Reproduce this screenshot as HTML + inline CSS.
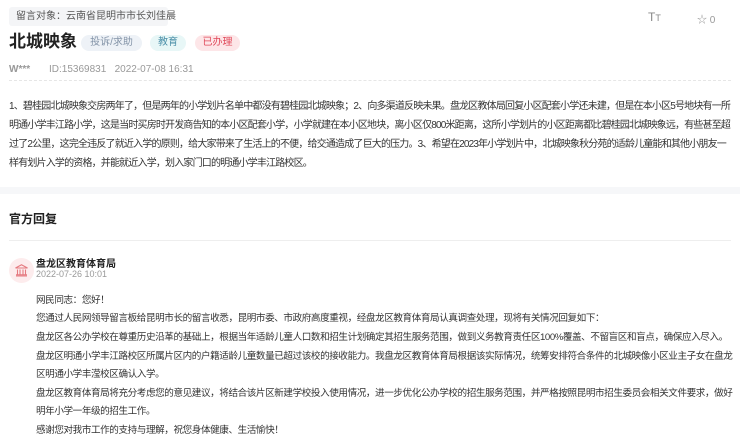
<!DOCTYPE html>
<html><head><meta charset="utf-8"><style>
*{margin:0;padding:0;box-sizing:border-box}
body{width:740px;height:446px;background:#fff;font-family:"Liberation Sans","Noto Sans CJK SC",sans-serif;color:#333;position:relative;overflow:hidden}
.a{position:absolute;white-space:nowrap}
.tag{position:absolute;height:16px;line-height:16px;border-radius:8px;font-size:10px;text-align:center}
.l{position:absolute;white-space:nowrap;font-size:10px;letter-spacing:-0.82px;color:#333;left:9px}
.r{position:absolute;white-space:nowrap;font-size:9.6px;letter-spacing:-0.43px;color:#333;left:36px}
</style></head><body>
<div class="a" style="left:9px;top:7px;width:159px;height:19px;background:#f4f5f7;border-radius:3px;font-size:10px;color:#555;line-height:19px;padding-left:7px">留言对象：云南省昆明市市长刘佳晨</div>
<div class="a" style="left:9px;top:31px;font-size:17px;font-weight:bold;color:#222;line-height:22px">北城映象</div>
<div class="tag" style="left:81px;top:35px;width:61px;background:#eef2f7;color:#8494a8">投诉/求助</div>
<div class="tag" style="left:150px;top:35px;width:36px;background:#e8f7f7;color:#4a8fa8">教育</div>
<div class="tag" style="left:195px;top:35px;width:45px;background:#fde6e8;color:#e0495a">已办理</div>
<div class="a" style="left:9px;top:63px;font-size:10px;color:#888;line-height:14px"><b style="color:#999">W***</b></div>
<div class="a" style="left:49px;top:63px;font-size:10px;color:#999;line-height:14px">ID:15369831&nbsp;&nbsp;&nbsp;2022-07-08 16:31</div>
<div class="a" style="left:9px;top:80px;width:722px;border-top:1px dashed #e6e6e6"></div>
<div class="a" style="left:648px;top:10px;font-size:12px;color:#888">T<span style="font-size:9px">T</span></div>
<div class="a" style="left:697px;top:11px;font-size:10px;color:#999">☆ 0</div>
<div class="l" style="top:97px">1、碧桂园北城映象交房两年了，但是两年的小学划片名单中都没有碧桂园北城映象；2、向多渠道反映未果。盘龙区教体局回复小区配套小学还未建，但是在本小区5号地块有一所</div>
<div class="l" style="top:116px">明通小学丰江路小学，这是当时买房时开发商告知的本小区配套小学，小学就建在本小区地块，离小区仅800米距离，这所小学划片的小区距离都比碧桂园北城映象远，有些甚至超</div>
<div class="l" style="top:135px">过了2公里，这完全违反了就近入学的原则，给大家带来了生活上的不便，给交通造成了巨大的压力。3、希望在2023年小学划片中，北城映象秋分苑的适龄儿童能和其他小朋友一</div>
<div class="l" style="top:154px">样有划片入学的资格，并能就近入学，划入家门口的明通小学丰江路校区。</div>
<div class="a" style="left:0;top:187px;width:740px;height:7px;background:#f6f7f9"></div>
<div class="a" style="left:9px;top:210px;font-size:12px;font-weight:bold;color:#222">官方回复</div>
<div class="a" style="left:9px;top:240px;width:722px;border-top:1px solid #eeeeee"></div>
<div class="a" style="left:9px;top:258px;width:25px;height:25px;border-radius:50%;background:#fdeced"></div>
<svg class="a" style="left:14px;top:263px" width="15" height="15" viewBox="0 0 15 15" fill="none" stroke="#e57a80" stroke-width="1.1"><path d="M1.5 5 L7.5 1.8 L13.5 5 Z M2 13 H13 M3.5 6.5 V11.5 M6 6.5 V11.5 M9 6.5 V11.5 M11.5 6.5 V11.5 M2 11.8 H13"/></svg>
<div class="a" style="left:36px;top:255px;font-size:10px;font-weight:bold;color:#222">盘龙区教育体育局</div>
<div class="a" style="left:36px;top:269px;font-size:9px;color:#999">2022-07-26 10:01</div>
<div class="r" style="top:292px">网民同志：您好！</div>
<div class="r" style="top:310px">您通过人民网领导留言板给昆明市长的留言收悉，昆明市委、市政府高度重视，经盘龙区教育体育局认真调查处理，现将有关情况回复如下：</div>
<div class="r" style="top:329px">盘龙区各公办学校在尊重历史沿革的基础上，根据当年适龄儿童人口数和招生计划确定其招生服务范围，做到义务教育责任区100%覆盖、不留盲区和盲点，确保应入尽入。</div>
<div class="r" style="top:348px">盘龙区明通小学丰江路校区所属片区内的户籍适龄儿童数量已超过该校的接收能力。我盘龙区教育体育局根据该实际情况，统筹安排符合条件的北城映像小区业主子女在盘龙</div>
<div class="r" style="top:366px">区明通小学丰滢校区确认入学。</div>
<div class="r" style="top:385px">盘龙区教育体育局将充分考虑您的意见建议，将结合该片区新建学校投入使用情况，进一步优化公办学校的招生服务范围，并严格按照昆明市招生委员会相关文件要求，做好</div>
<div class="r" style="top:403px">明年小学一年级的招生工作。</div>
<div class="r" style="top:422px">感谢您对我市工作的支持与理解，祝您身体健康、生活愉快！</div>
</body></html>
